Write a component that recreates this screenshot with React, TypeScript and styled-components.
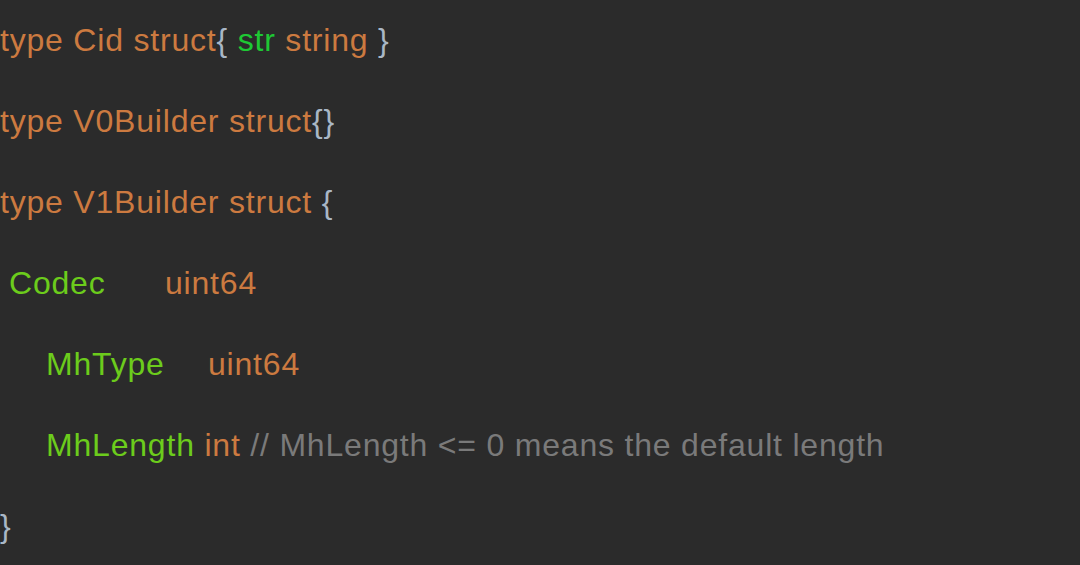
import React from "react";
import styled, { createGlobalStyle } from "styled-components";

const Global = createGlobalStyle`
  html, body { margin: 0; padding: 0; background: #2b2b2b; }
  #root { width: 1080px; height: 565px; overflow: hidden; }
`;

const Editor = styled.div`
  width: 1080px;
  height: 565px;
  background: #2b2b2b;
  font-family: "Liberation Sans", Arial, sans-serif;
  font-size: 32px;
  letter-spacing: 0.8px;
  display: flex;
  flex-direction: column;
  box-sizing: border-box;
`;

const Line = styled.div<{ $indent?: number }>`
  height: 81px;
  line-height: 81px;
  padding-left: ${(p) => p.$indent ?? 0}px;
  white-space: pre;
  color: #cc7a40;
`;

type Kind = "kw" | "field" | "str" | "brace" | "comment";

const colors: Record<Kind, string> = {
  kw: "#cc7a40",
  field: "#6ccc1c",
  str: "#1ec834",
  brace: "#a9b7c6",
  comment: "#7a7a7a",
};

const Tok = styled.span<{ $k: Kind; $w?: number }>`
  color: ${(p) => colors[p.$k]};
  display: inline-block;
  width: ${(p) => (p.$w ? `${p.$w}px` : "auto")};
`;

export default function App() {
  return (
    <>
      <Global />
      <Editor>
        <Line>
          <Tok $k="kw">type Cid struct</Tok>
          <Tok $k="brace">{"{ "}</Tok>
          <Tok $k="str">str</Tok>
          <Tok $k="kw">{" string "}</Tok>
          <Tok $k="brace">{"}"}</Tok>
        </Line>
        <Line>
          <Tok $k="kw">type V0Builder struct</Tok>
          <Tok $k="brace">{"{}"}</Tok>
        </Line>
        <Line>
          <Tok $k="kw">{"type V1Builder struct "}</Tok>
          <Tok $k="brace">{"{"}</Tok>
        </Line>
        <Line $indent={9}>
          <Tok $k="field" $w={156}>Codec</Tok>
          <Tok $k="kw">uint64</Tok>
        </Line>
        <Line $indent={46}>
          <Tok $k="field" $w={162}>MhType</Tok>
          <Tok $k="kw">uint64</Tok>
        </Line>
        <Line $indent={46}>
          <Tok $k="field">MhLength</Tok>
          <Tok $k="kw">{" int "}</Tok>
          <Tok $k="comment">// MhLength &lt;= 0 means the default length</Tok>
        </Line>
        <Line>
          <Tok $k="brace">{"}"}</Tok>
        </Line>
      </Editor>
    </>
  );
}
